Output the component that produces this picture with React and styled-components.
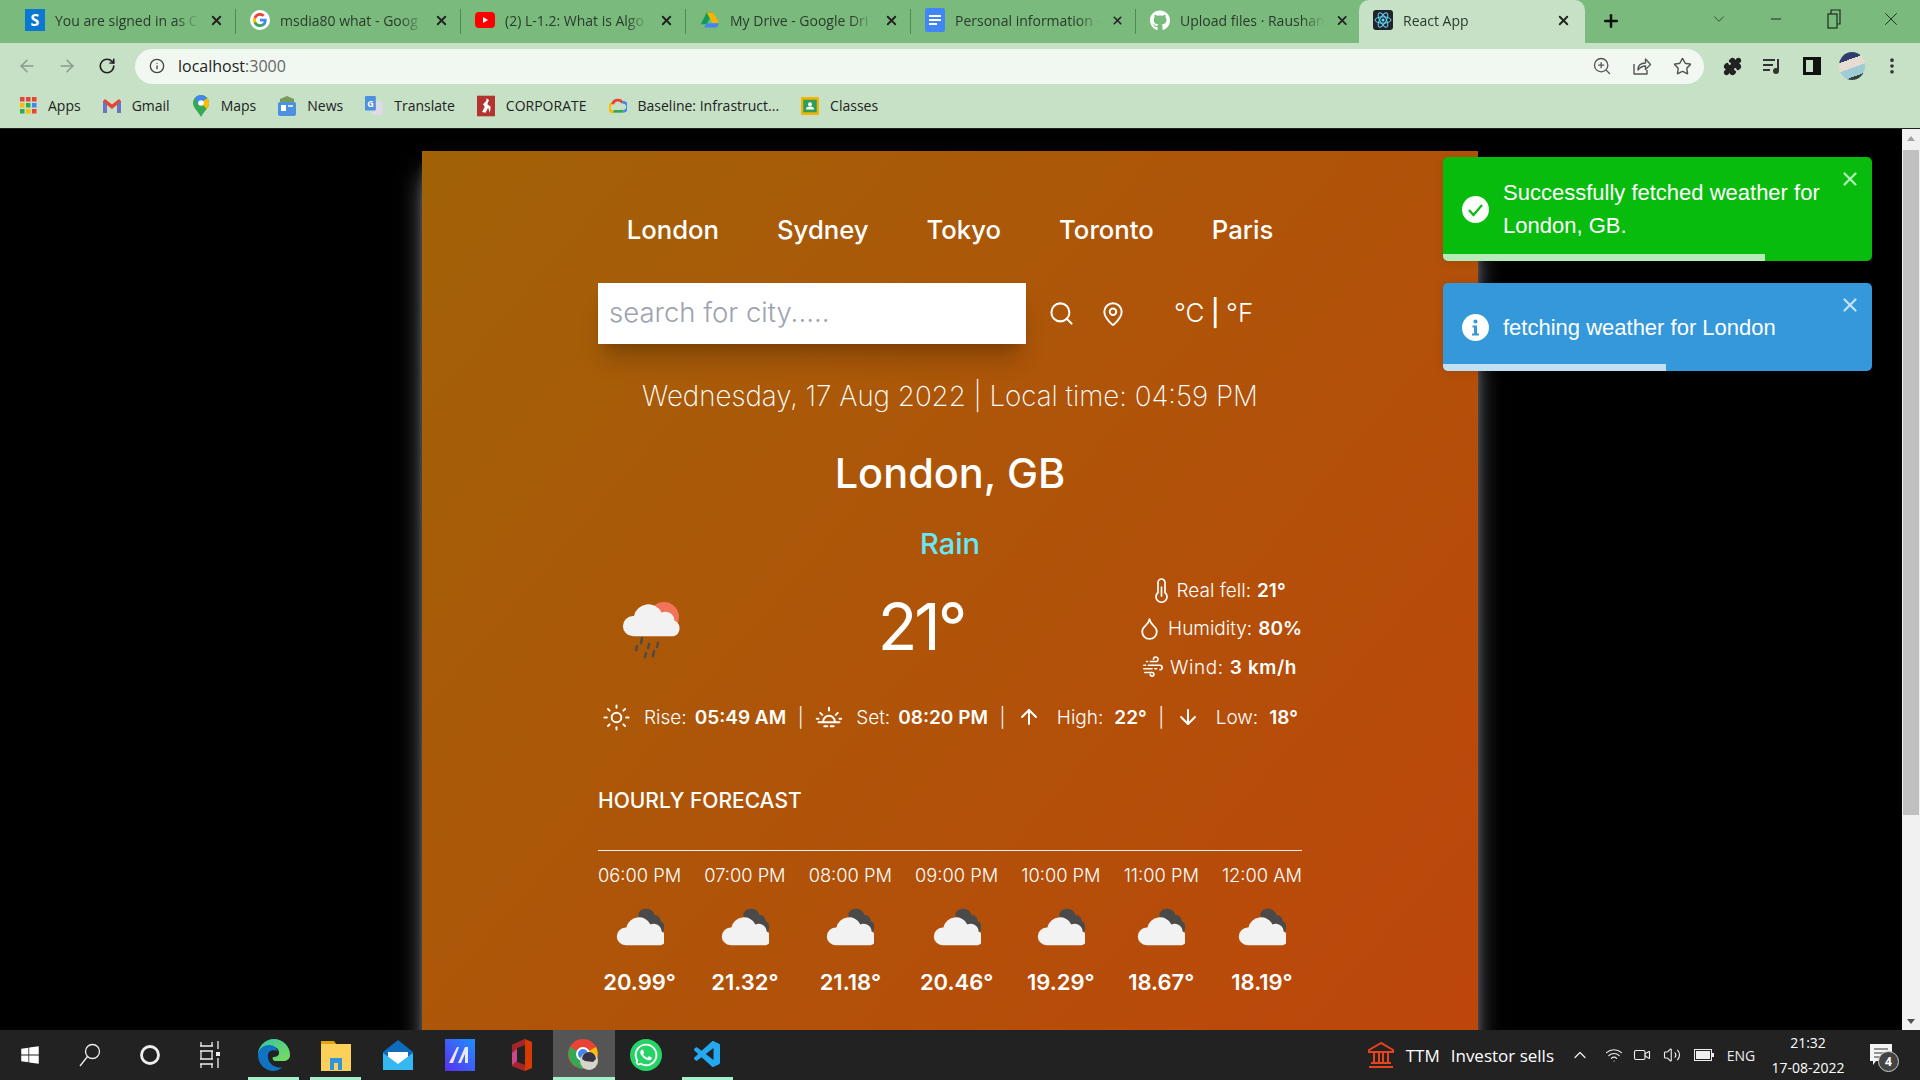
import React from "react";
import styled, { createGlobalStyle } from "styled-components";
import {
  Search, MapPin, Droplet, Sun, ArrowUp, ArrowDown, X, Plus, ArrowLeft, ArrowRight,
  RotateCw, Info, ZoomIn, Star, Puzzle, ChevronDown, Minus, EllipsisVertical, ChevronUp, Wifi, Video, Volume2,
} from "lucide-react";
import { FaGithub, FaWindows, FaWhatsapp } from "react-icons/fa";
import { VscVscode } from "react-icons/vsc";

const GlobalStyle = createGlobalStyle`
  html, body { margin: 0; padding: 0; background: #000; overflow: hidden; }
  * { box-sizing: border-box; }
`;

const Shell = styled.div`
  width: 1920px;
  height: 1080px;
  display: flex;
  flex-direction: column;
  overflow: hidden;
  font-family: "Open Sans", "Liberation Sans", sans-serif;
`;

/* ---- browser chrome ---- */
const TabStrip = styled.div`
  height: 43px;
  background: #7abb7d;
  display: flex;
  align-items: stretch;
  padding-left: 11px;
  flex-shrink: 0;
`;
const Tab = styled.div`
  width: ${(p) => (p.$active ? "226px" : "225px")};
  margin-left: ${(p) => (p.$active ? "-2px" : "0")};
  display: flex;
  align-items: center;
  padding: 0 ${(p) => (p.$active ? 14 : 12)}px 3px 14px;
  gap: 10px;
  position: relative;
  color: #2b3a2c;
  font-size: 14px;
  background: ${(p) => (p.$active ? "#c6e1c6" : "transparent")};
  border-radius: ${(p) => (p.$active ? "10px 10px 0 0" : "0")};
  ${(p) =>
    p.$sep &&
    `&::after { content: ""; position: absolute; right: 0; top: 9px; height: 25px; width: 1px; background: #4f8a53; }`}
`;
const TabTitle = styled.span`
  flex: 1;
  white-space: nowrap;
  -webkit-mask-image: linear-gradient(90deg, #000 ${(p) => (p.$active ? "100%" : "84%")}, transparent);
  mask-image: linear-gradient(90deg, #000 ${(p) => (p.$active ? "100%" : "84%")}, transparent);
`;
const Fav = styled.span`
  width: 20px;
  height: 20px;
  flex-shrink: 0;
  display: flex;
  align-items: center;
  justify-content: center;
`;
const NewTab = styled.div`
  width: 52px;
  padding-bottom: 2px;
  display: flex;
  align-items: center;
  justify-content: center;
  color: #111;
`;
const WindowControls = styled.div`
  margin-left: auto;
  display: flex;
`;
const WindowBtn = styled.div`
  width: 57.5px;
  display: flex;
  align-items: center;
  justify-content: center;
  padding-bottom: 6px;
  color: #1c2b1d;
`;
const Toolbar = styled.div`
  height: 43px;
  background: #c6e1c6;
  display: flex;
  align-items: center;
  padding: 3px 8px 0 7px;
  flex-shrink: 0;
`;
const ToolBtn = styled.div`
  width: ${(p) => p.$w || 40}px;
  height: 35px;
  display: flex;
  align-items: center;
  justify-content: center;
  flex-shrink: 0;
  color: ${(p) => p.$color || "#333"};
`;
const OmniBtn = styled(ToolBtn)`
  margin-left: ${(p) => (p.$first ? "0" : "-13px")};
`;
const Omnibox = styled.div`
  flex: 1;
  height: 35px;
  margin: 0 8px;
  background: #f1f8f1;
  border-radius: 18px;
  display: flex;
  align-items: center;
  padding: 0 2px 0 14px;
  gap: 13px;
  font-size: 16px;
  color: #222;
`;
const Url = styled.span`
  flex: 1;
  span { color: #666; }
`;
const Avatar = styled.div`
  width: 26px;
  height: 28px;
  border-radius: 50%;
  background: linear-gradient(160deg, #2f3d6b 0 30%, #e7dcd2 30% 55%, #9ecbd6 55% 80%, #33403c 80%);
`;
const BookmarksBar = styled.div`
  height: 43px;
  background: #c6e1c6;
  border-bottom: 1px solid #222;
  display: flex;
  align-items: center;
  padding: 0 0 3px 19px;
  gap: 22px;
  flex-shrink: 0;
  font-size: 14px;
  color: #222;
`;
const Bookmark = styled.div`
  display: flex;
  align-items: center;
  gap: 11px;
  white-space: nowrap;
`;
const BookmarkIcon = styled.span`
  width: 18px;
  height: 24px;
  display: flex;
  align-items: center;
  justify-content: center;
`;

/* ---- page ---- */
const Viewport = styled.div`
  flex: 1;
  min-height: 0;
  display: flex;
  position: relative;
  background: #000;
`;
const Page = styled.div`
  flex: 1;
  overflow: hidden;
  display: flex;
  justify-content: center;
  padding: 22px 2px 0 0;
`;
const Panel = styled.main`
  width: 1056px;
  height: 1240px;
  padding: 64px 176px 0;
  flex-shrink: 0;
  color: #fff;
  font-family: Inter, "Open Sans", sans-serif;
  background: linear-gradient(to bottom right, #a16207, #c2410c);
  box-shadow: 0 20px 25px -5px #9ca3af, 0 8px 10px -6px #9ca3af;
`;
const Nav = styled.nav`
  display: flex;
  justify-content: center;
  gap: 58px;
  font-size: 25.7px;
  line-height: 30px;
  font-weight: 500;
`;
const SearchRow = styled.div`
  margin-top: 38px;
  display: flex;
  align-items: center;
`;
const SearchInput = styled.input`
  width: 428px;
  height: 61px;
  border: 0;
  outline: 0;
  padding: 0 11px 4px;
  font: 300 27.5px Inter, sans-serif;
  background: #fff;
  box-shadow: 0 20px 25px -5px rgba(0, 0, 0, 0.2), 0 8px 10px -6px rgba(0, 0, 0, 0.15);
  &::placeholder { color: #9ca3af; opacity: 1; }
`;
const IconBtn = styled.span`
  display: flex;
  margin-left: ${(p) => p.$ml}px;
`;
const Units = styled.div`
  margin-left: 48px;
  padding-bottom: 2px;
  font-size: 26px;
  font-weight: 300;
  white-space: nowrap;
  word-spacing: -1px;
  b { font-weight: 500; }
`;
const DateLine = styled.p`
  margin: 32px 0 0;
  text-align: center;
  font-size: 27.7px;
  line-height: 40px;
  font-weight: 200;
`;
const City = styled.h1`
  margin: 32px 0 0;
  text-align: center;
  font-size: 41.5px;
  line-height: 50px;
  font-weight: 500;
`;
const Condition = styled.p`
  margin: 28px 0 0;
  text-align: center;
  font-size: 29px;
  line-height: 36px;
  font-weight: 500;
  color: #67e8f9;
`;
const NowRow = styled.div`
  margin-top: 9px;
  height: 115px;
  display: flex;
  align-items: center;
  justify-content: space-between;
`;
const IconWrap = styled.div`
  width: 110px;
  display: flex;
  justify-content: center;
`;
const BigTemp = styled.div`
  font-size: 65px;
  font-weight: 400;
  letter-spacing: -3px;
  padding: 0 3px 4px 0;
`;
const Details = styled.div`
  display: flex;
  flex-direction: column;
  align-items: center;
`;
const Detail = styled.div`
  display: flex;
  align-items: center;
  gap: 6px;
  height: 38.5px;
  font-size: 19px;
  font-weight: 300;
  white-space: nowrap;
  letter-spacing: ${(p) => p.$ls || 0}px;
  b { font-weight: 600; }
`;
const SunRow = styled.div`
  margin-top: 16px;
  height: 30px;
  display: flex;
  align-items: center;
  justify-content: center;
  font-size: 19px;
  font-weight: 300;
  white-space: nowrap;
`;
const Stat = styled.div`
  display: flex;
  align-items: center;
  gap: ${(p) => p.$gap}px;
  b { font-weight: 600; margin-left: -5px; }
`;
const Bar = styled.span`
  margin: 0 11.5px;
`;
const ForecastTitle = styled.h2`
  margin: 54px 0 0;
  font-size: 21px;
  line-height: 30px;
  font-weight: 500;
`;
const Rule = styled.hr`
  margin: 34px 0 0;
  border: 0;
  border-top: 1px solid #eee;
`;
const HourRow = styled.div`
  margin-top: 11px;
  display: flex;
  justify-content: space-between;
`;
const HourCol = styled.div`
  display: flex;
  flex-direction: column;
  align-items: center;
  font-size: 18.3px;
  font-weight: 300;
  line-height: 26px;
  white-space: nowrap;
`;
const HourIcon = styled.div`
  height: 50px;
  margin-top: 13px;
  display: flex;
  align-items: center;
`;
const HourTemp = styled.div`
  margin-top: 18px;
  font-size: 22px;
  font-weight: 600;
`;

/* ---- toasts ---- */
const Toasts = styled.div`
  position: absolute;
  left: 1443px;
  top: 28px;
  width: 429px;
  display: flex;
  flex-direction: column;
  gap: 22px;
  font-family: "Liberation Sans", Arial, sans-serif;
  color: #fff;
`;
const Toast = styled.div`
  position: relative;
  height: ${(p) => p.$h}px;
  background: ${(p) => p.$bg};
  border-radius: 5px;
  overflow: hidden;
  display: flex;
  align-items: center;
  padding: 0 40px 0 19px;
  gap: 14px;
  font-size: 22px;
  line-height: 33px;
  box-shadow: 0 1px 10px rgba(0, 0, 0, 0.1);
  svg { flex-shrink: 0; }
`;
const ToastClose = styled.span`
  position: absolute;
  top: 11px;
  right: 11px;
  display: flex;
  opacity: 0.7;
`;
const Progress = styled.div`
  position: absolute;
  left: 0;
  bottom: 0;
  height: 7px;
  background: rgba(255, 255, 255, 0.7);
`;

/* ---- scrollbar ---- */
const ScrollTrack = styled.div`
  width: 18px;
  flex-shrink: 0;
  background: #f1f1f1;
  display: flex;
  flex-direction: column;
  align-items: stretch;
`;
const ScrollArrow = styled.div`
  height: 18px;
  display: flex;
  align-items: center;
  justify-content: center;
  &::before {
    content: "";
    border-left: 4px solid transparent;
    border-right: 4px solid transparent;
    ${(p) => (p.$down ? "border-top: 5px solid #505050;" : "border-bottom: 5px solid #a3a3a3;")}
  }
`;
const ScrollThumb = styled.div`
  height: 665px;
  margin: 3px 1px 0 1px;
  background: #c0c0c0;
`;
const ScrollRest = styled.div`
  flex: 1;
`;

/* ---- taskbar ---- */
const Taskbar = styled.footer`
  height: 50px;
  flex-shrink: 0;
  background: #222;
  color: #fff;
  display: flex;
  align-items: center;
  font-family: "Open Sans", sans-serif;
`;
const SysBtn = styled.div`
  width: 60px;
  height: 50px;
  display: flex;
  align-items: center;
  justify-content: center;
`;
const PinnedRow = styled.div`
  margin-left: 3px;
  display: flex;
`;
const Pinned = styled.div`
  width: 62px;
  height: 50px;
  position: relative;
  display: flex;
  align-items: center;
  justify-content: center;
  background: ${(p) => (p.$current ? "#555" : "transparent")};
  ${(p) =>
    p.$open &&
    `&::after { content: ""; position: absolute; bottom: 0; left: ${p.$current ? 0 : 5}px; right: ${p.$current ? 0 : 6}px; height: 3px; background: #a4efcc; }`}
`;
const Tray = styled.div`
  margin-left: auto;
  height: 50px;
  padding-right: 14px;
  display: flex;
  align-items: center;
`;
const Ticker = styled.div`
  display: flex;
  align-items: center;
  gap: 11px;
  font-size: 17px;
  margin-right: 7px;
  white-space: nowrap;
`;
const TrayIcon = styled.div`
  width: ${(p) => p.$w || 30}px;
  margin-right: 2px;
  display: flex;
  justify-content: center;
  font-size: 14px;
  color: #eee;
`;
const Clock = styled.div`
  width: 90px;
  text-align: center;
  font-size: 14px;
  line-height: 25px;
`;
const Notify = styled.div`
  width: 50px;
  margin-left: 3px;
  display: flex;
  justify-content: center;
  position: relative;
`;
const Badge = styled.span`
  position: absolute;
  right: 7px;
  top: 7px;
  width: 21px;
  height: 21px;
  border-radius: 50%;
  border: 1px solid #ccc;
  background: #444;
  font-size: 12px;
  font-weight: 700;
  display: flex;
  align-items: center;
  justify-content: center;
`;

/* ---- drawings ---- */
const CloudPath = "M12 46a11 11 0 0 1 0-22h1a16 16 0 0 1 30-4 10 10 0 0 1 14 9 9 9 0 0 1-1 17z";

const RainIcon = () => (
  <svg width="62" height="60" viewBox="0 0 62 60">
    <circle cx="42" cy="18" r="15" fill="#f0735a" />
    <g transform="translate(0 -5) scale(.92)">
      <path d={CloudPath} fill="#f2f2f2" />
    </g>
    <g stroke="#4a4a4a" strokeWidth="2.4" strokeLinecap="round">
      <path d="M20 39l-1 5M15 47l-1 4M27 45l-1 4M36 44l-1 4M24 54l-1 4M32 52l-1 5" />
    </g>
  </svg>
);

const CloudIcon = () => (
  <svg width="48" height="42" viewBox="0 0 60 52">
    <path d="M28 10a11 11 0 0 1 20 2 9 9 0 0 1 8 8 8 8 0 0 1 1 14 8 8 0 0 1-8 6H30z" fill="#4a4a4a" />
    <path d={CloudPath} fill="#f2f2f2" transform="translate(0 4)" />
  </svg>
);

const GoogleG = ({ size = 20 }) => (
  <svg width={size} height={size} viewBox="0 0 24 24">
    <circle cx="12" cy="12" r="12" fill="#fff" />
    <path d="M20 12.2c0-.6 0-1.100-.1-1.700H12v3.300h4.500a3.900 3.900 0 0 1-1.700 2.500v2.100h2.700c1.600-1.500 2.500-3.600 2.500-6.200z" fill="#4285f4" />
    <path d="M12 20.400c2.300 0 4.200-.8 5.500-2l-2.700-2.100c-.7.500-1.700.8-2.800.8-2.200 0-4-1.500-4.700-3.400H4.500v2.100a8.300 8.300 0 0 0 7.500 4.600z" fill="#34a853" />
    <path d="M7.300 13.700a5 5 0 0 1 0-3.300V8.300H4.500a8.300 8.300 0 0 0 0 7.500z" fill="#fbbc05" />
    <path d="M12 6.900c1.200 0 2.300.4 3.200 1.200l2.400-2.400A8.300 8.300 0 0 0 4.500 8.300l2.800 2.100C8 8.500 9.800 6.900 12 6.900z" fill="#ea4335" />
  </svg>
);
const SharePoint = () => (
  <svg width="20" height="22" viewBox="0 0 20 22">
    <rect width="20" height="22" fill="#0a78d1" />
    <text x="10" y="17" textAnchor="middle" fontSize="16" fontWeight="700" fontFamily="Open Sans" fill="#fff">S</text>
  </svg>
);
const YouTube = () => (
  <svg width="20" height="16" viewBox="0 0 20 16">
    <rect width="20" height="16" rx="4" fill="#f00" />
    <path d="M8 5l5 3-5 3z" fill="#fff" />
  </svg>
);
const Drive = ({ size = 20 }) => (
  <svg width={size} height={size} viewBox="0 0 24 24">
    <path d="M8 3h8l-8 14H1z" fill="#0f9d58" />
    <path d="M8 3h8l7 13h-8z" fill="#f4b400" />
    <path d="M5 21l3-5h15l-3 5z" fill="#4285f4" />
  </svg>
);
const Docs = () => (
  <svg width="20" height="24" viewBox="0 0 20 24">
    <rect width="20" height="24" rx="2" fill="#4285f4" />
    <path d="M4 8h12M4 12h12M4 16h8" stroke="#fff" strokeWidth="2" />
  </svg>
);
const ReactFav = () => (
  <svg width="20" height="20" viewBox="0 0 20 20">
    <rect width="20" height="20" rx="3" fill="#20232a" />
    <g fill="none" stroke="#61dafb" strokeWidth="1">
      <ellipse cx="10" cy="10" rx="8" ry="3.200" />
      <ellipse cx="10" cy="10" rx="8" ry="3.200" transform="rotate(60 10 10)" />
      <ellipse cx="10" cy="10" rx="8" ry="3.200" transform="rotate(120 10 10)" />
    </g>
    <circle cx="10" cy="10" r="1.500" fill="#61dafb" />
  </svg>
);
const Apps = () => (
  <svg width="17" height="17" viewBox="0 0 17 17">
    {[0, 1, 2].map((r) =>
      [0, 1, 2].map((c) => (
        <rect key={`${r}${c}`} x={c * 6} y={r * 6} width="4.500" height="4.500"
          fill={[["#ea4335", "#ea4335", "#ea4335"], ["#fbbc05", "#34a853", "#4285f4"], ["#34a853", "#fbbc05", "#ea4335"]][r][c]} />
      ))
    )}
  </svg>
);
const Gmail = () => (
  <svg width="18" height="14" viewBox="0 0 18 14">
    <path d="M0 2v12h4V6l5 4 5-4v8h4V2l-2-2-7 5.500L2 0z" fill="#ea4335" />
    <path d="M0 2v12h4V5zM18 2v12h-4V5z" fill="#4285f4" opacity=".75" />
  </svg>
);
const MapsPin = () => (
  <svg width="16" height="22" viewBox="0 0 16 22">
    <path d="M8 0a8 8 0 0 0-8 8c0 5 5 8 8 14 3-6 8-9 8-14a8 8 0 0 0-8-8z" fill="#34a853" />
    <path d="M2 2.500L14 14c1-2 2-3.800 2-6a8 8 0 0 0-1.500-4.600z" fill="#fbbc05" />
    <path d="M2.300 2.400A8 8 0 0 1 14 3L5 10z" fill="#4285f4" />
    <circle cx="8" cy="8" r="2.800" fill="#fff" />
  </svg>
);
const NewsIcon = () => (
  <svg width="18" height="20" viewBox="0 0 18 20">
    <path d="M2 3l7-3 7 3v4H2z" fill="#7a9a5c" />
    <rect y="6" width="18" height="14" rx="2" fill="#4d8fe0" />
    <rect x="3" y="9" width="5" height="6" fill="#fff" />
    <rect x="10" y="9" width="5" height="2" fill="#cfe0f7" />
  </svg>
);
const TranslateIcon = () => (
  <svg width="20" height="22" viewBox="0 0 20 22">
    <rect x="7" y="6" width="13" height="15" rx="1" fill="#dcdce6" />
    <rect width="12" height="16" rx="1" fill="#4d8fe0" />
    <text x="6" y="12" textAnchor="middle" fontSize="10" fontWeight="700" fontFamily="Open Sans" fill="#fff">G</text>
  </svg>
);
const Corporate = () => (
  <svg width="21" height="24" viewBox="0 0 21 24">
    <rect width="21" height="24" fill="#b2332f" />
    <path d="M11 3l3 2-2 5 4 3-1 7-2-6-3 6-4-1 3-6-2-3 4-4z" fill="#fff" />
  </svg>
);
const CloudColor = () => (
  <svg width="20" height="17" viewBox="0 0 20 17">
    <path d="M5 16a5 5 0 0 1-1-9.800" fill="none" stroke="#fbbc05" strokeWidth="3" />
    <path d="M4 7a6 6 0 0 1 11-1.500" fill="none" stroke="#ea4335" strokeWidth="3" />
    <path d="M15 5a5 5 0 0 1 1 10" fill="none" stroke="#4285f4" strokeWidth="3" />
    <path d="M5 15h11" stroke="#34a853" strokeWidth="3" />
  </svg>
);
const Classroom = () => (
  <svg width="20" height="20" viewBox="0 0 20 20">
    <rect width="20" height="20" rx="1.500" fill="#f4b400" />
    <rect x="2.500" y="3" width="15" height="14" fill="#2f9e5b" />
    <circle cx="10" cy="8" r="2.200" fill="#fff" />
    <path d="M5.500 14a4.500 3.500 0 0 1 9 0z" fill="#fff" />
  </svg>
);
const ThermoIcon = () => (
  <svg width="17" height="25" viewBox="0 0 17 25" fill="none" stroke="#fff" strokeWidth="1.700" strokeLinecap="round">
    <path d="M5 14.500V4.500a3.500 3.500 0 0 1 7 0v10a5.500 5.500 0 1 1-7 0z" />
    <path d="M8.500 9v9" />
  </svg>
);
const WindIcon = () => (
  <svg width="22" height="22" viewBox="0 0 24 24" fill="none" stroke="#fff" strokeWidth="1.700" strokeLinecap="round">
    <path d="M9 6h6a2.500 2.500 0 1 0-2.500-2.500M2 10h2M7 10h12.500a2.500 2.500 0 1 1 0 5M2 14h9M14 14h2M3 18h8a2 2 0 1 1-2 2M5 6h1" />
  </svg>
);
const SunsetIcon = () => (
  <svg width="28" height="28" viewBox="0 0 24 24" fill="none" stroke="#fff" strokeWidth="1.700" strokeLinecap="round">
    <path d="M7 16a5 5 0 0 1 10 0M3 16.500h18M12 4v2.500M4.500 8.500l1.700 1.700M19.500 8.500l-1.700 1.700M1.500 13.500h1.500M21 13.500h1.500M8 20h2.500M13.500 20H16" />
  </svg>
);
const RestoreIcon = () => (
  <svg width="14" height="20" viewBox="0 0 14 20" fill="none" stroke="#1c2b1d" strokeWidth="1.200">
    <rect x="1" y="5" width="9" height="14" />
    <path d="M4 5V1h9v14h-3" />
  </svg>
);
const ShareIcon = () => (
  <svg width="20" height="20" viewBox="0 0 20 20" fill="none" stroke="#555" strokeWidth="1.400" strokeLinejoin="round">
    <path d="M2 8v10h13v-4" />
    <path d="M6 14c0-5 3-7 7.500-7V3l5 5.500-5 5v-3.500c-3.500 0-5.500 1.500-7.500 4z" />
  </svg>
);
const MediaIcon = () => (
  <svg width="20" height="20" viewBox="0 0 20 20" fill="none" stroke="#333" strokeWidth="2">
    <path d="M1 4h12M1 9h10M1 14h7M16 3v11" />
    <circle cx="14" cy="15" r="2" fill="#333" />
  </svg>
);
const SidePanel = () => (
  <svg width="18" height="18" viewBox="0 0 18 18">
    <rect x="1.500" y="1.500" width="15" height="15" fill="none" stroke="#111" strokeWidth="3" />
    <rect x="10" y="2" width="6" height="14" fill="#111" />
  </svg>
);
const Magnifier = () => (
  <svg width="22" height="24" viewBox="0 0 22 24" fill="none" stroke="#eee" strokeWidth="1.300">
    <circle cx="13.500" cy="8.500" r="7" />
    <path d="M8.500 13.500L1 23" />
  </svg>
);
const Cortana = () => (
  <svg width="22" height="22" viewBox="0 0 22 22">
    <circle cx="11" cy="11" r="8.500" fill="none" stroke="#eee" strokeWidth="2.800" />
  </svg>
);
const TaskView = () => (
  <svg width="20" height="30" viewBox="0 0 20 30" fill="none" stroke="#eee" strokeWidth="1.300">
    <path d="M0 6h13M0 11h13M0 19h13M0 24h13M1 11v8M12 11v8M1 2v4M12 2v4M1 24v4M12 24v4" />
    <path d="M18 1v8M18 18v10" />
    <rect x="16" y="12" width="4" height="4" fill="#eee" stroke="none" />
  </svg>
);
const Edge = () => (
  <svg width="32" height="32" viewBox="0 0 32 32">
    <defs>
      <linearGradient id="edgeA" x1="0" y1="0" x2="1" y2="1">
        <stop offset="0" stopColor="#36c5a5" />
        <stop offset="1" stopColor="#7ade5a" />
      </linearGradient>
    </defs>
    <path d="M16 0a16 16 0 0 1 16 16c0 4-3 6-7 6h-7c-3 0-4-2-3-4 3 0 6-1 6-4C21 8 14 6 8 9 3 11 0 15 0 16 0 7 7 0 16 0z" fill="url(#edgeA)" />
    <path d="M0 16c0-6 6-10 11-10 5 0 8 3 8 6-5-2-10 0-9 7 1 7 9 11 15 9a16 16 0 0 1-9 4C7 32 0 25 0 16z" fill="#0f74c4" />
  </svg>
);
const Explorer = () => (
  <svg width="30" height="32" viewBox="0 0 30 32">
    <path d="M0 2h13l3 4H0z" fill="#e5a50a" />
    <rect y="5" width="30" height="27" fill="#fbd15b" />
    <path d="M9 31V19h12v12h-4v-7h-4v7z" fill="#2f95dc" />
  </svg>
);
const Mail = () => (
  <svg width="30" height="30" viewBox="0 0 30 30">
    <path d="M15 0l15 12v18H0V12z" fill="#0f6cbd" />
    <path d="M5 12h20v5l-10 8-10-8z" fill="#fff" />
    <path d="M0 30V13l15 11 15-11v17z" fill="#35b8f1" />
  </svg>
);
const MaxApp = () => (
  <svg width="30" height="32" viewBox="0 0 30 32">
    <defs>
      <linearGradient id="maxA" x1="0" y1="1" x2="1" y2="0">
        <stop offset="0" stopColor="#5b2ff0" />
        <stop offset="1" stopColor="#1e90ff" />
      </linearGradient>
    </defs>
    <rect width="30" height="32" fill="url(#maxA)" />
    <path d="M4 24L12 8h2L8 24zM13 24L20 8h3v16h-3v-9l-4 9z" fill="#e8e8ff" />
  </svg>
);
const Office = () => (
  <svg width="24" height="32" viewBox="0 0 24 32">
    <path d="M2 6l13-6 7 3v26l-7 3-13-5z" fill="#d83b01" />
    <path d="M2 6l13-6v6L7 9v14l8 3v6L2 27z" fill="#a4262c" />
    <path d="M7 9l8-3v20l-8-3z" fill="#222" />
    <path d="M2 14l5-4v12l-5 4z" fill="#c84a8a" />
  </svg>
);
const ChromeAvatar = () => (
  <svg width="32" height="32" viewBox="0 0 32 32">
    <circle cx="15" cy="15" r="15" fill="#ea4335" />
    <path d="M15 15L28 8a15 15 0 0 1-8 21z" fill="#fbbc05" />
    <path d="M15 15l5 14A15 15 0 0 1 2 8z" fill="#34a853" />
    <circle cx="15" cy="15" r="6" fill="#4285f4" stroke="#fff" strokeWidth="2" />
    <circle cx="21" cy="22" r="9" fill="#d8d4cc" />
    <path d="M14 20a7 7 0 0 1 14 0l-3 3-8-1z" fill="#334" />
  </svg>
);
const Bank = () => (
  <svg width="28" height="28" viewBox="0 0 28 28" fill="none" stroke="#e8431c" strokeWidth="2">
    <path d="M14 2L2 9v2h24V9zM2 26h24M4 22h20M7 11v11M12 11v11M16 11v11M21 11v11" />
  </svg>
);
const Battery = () => (
  <svg width="20" height="12" viewBox="0 0 20 12">
    <rect x=".500" y=".500" width="17" height="11" fill="none" stroke="#eee" />
    <rect x="2" y="2" width="14" height="8" fill="#eee" />
    <rect x="18" y="4" width="2" height="4" fill="#eee" />
  </svg>
);
const ChatIcon = () => (
  <svg width="22" height="22" viewBox="0 0 22 22">
    <path d="M0 0h22v17H6l-3 4v-4H0z" fill="#f4f4f4" />
    <path d="M4 5h14M4 9h14M4 13h9" stroke="#333" strokeWidth="1.200" />
  </svg>
);
const ToastCheck = () => (
  <svg width="27" height="27" viewBox="0 0 27 27">
    <circle cx="13.500" cy="13.500" r="13.500" fill="#fff" />
    <path d="M7 14l4.500 5L20 9" fill="none" stroke="#07bc0c" strokeWidth="2.200" />
  </svg>
);
const ToastInfo = () => (
  <svg width="27" height="27" viewBox="0 0 27 27">
    <circle cx="13.500" cy="13.500" r="13.500" fill="#fff" />
    <circle cx="13.500" cy="7.500" r="2" fill="#3498db" />
    <path d="M10.500 11.500h4.500v8h2v2h-7v-2h2v-6h-1.500z" fill="#3498db" />
  </svg>
);
const WhatsApp = styled(FaWhatsapp)`
  background: #25d366;
  border-radius: 50%;
  padding: 3px;
`;

/* ---- data ---- */
const tabs = [
  { title: "You are signed in as C", icon: <SharePoint /> },
  { title: "msdia80 what - Goog", icon: <GoogleG /> },
  { title: "(2) L-1.2: What is Algo", icon: <YouTube /> },
  { title: "My Drive - Google Dri", icon: <Drive /> },
  { title: "Personal information -", icon: <Docs /> },
  { title: "Upload files · Raushan", icon: <FaGithub size={21} color="#fff" /> },
];
const bookmarks = [
  { label: "Apps", icon: <Apps /> },
  { label: "Gmail", icon: <Gmail /> },
  { label: "Maps", icon: <MapsPin /> },
  { label: "News", icon: <NewsIcon /> },
  { label: "Translate", icon: <TranslateIcon /> },
  { label: "CORPORATE", icon: <Corporate /> },
  { label: "Baseline: Infrastruct...", icon: <CloudColor /> },
  { label: "Classes", icon: <Classroom /> },
];
const cities = ["London", "Sydney", "Tokyo", "Toronto", "Paris"];
const hours = [
  ["06:00 PM", "20.99°"],
  ["07:00 PM", "21.32°"],
  ["08:00 PM", "21.18°"],
  ["09:00 PM", "20.46°"],
  ["10:00 PM", "19.29°"],
  ["11:00 PM", "18.67°"],
  ["12:00 AM", "18.19°"],
];
const pinned = [
  { icon: <Edge />, open: true },
  { icon: <Explorer />, open: true },
  { icon: <Mail /> },
  { icon: <MaxApp /> },
  { icon: <Office /> },
  { icon: <ChromeAvatar />, open: true, current: true },
  { icon: <WhatsApp size={32} color="#fff" /> },
  { icon: <VscVscode size={32} color="#23a9f2" />, open: true },
];

export default function App() {
  return (
    <Shell>
      <GlobalStyle />
      <TabStrip>
        {tabs.map((t, i) => (
          <Tab key={t.title} $sep={i < 5}>
            <Fav>{t.icon}</Fav>
            <TabTitle>{t.title}</TabTitle>
            <X size={15} strokeWidth={3} color="#222" />
          </Tab>
        ))}
        <Tab $active>
          <Fav><ReactFav /></Fav>
          <TabTitle $active>React App</TabTitle>
          <X size={15} strokeWidth={3} color="#222" />
        </Tab>
        <NewTab><Plus size={20} strokeWidth={3} /></NewTab>
        <WindowControls>
          <WindowBtn><ChevronDown size={18} strokeWidth={1} /></WindowBtn>
          <WindowBtn><Minus size={16} strokeWidth={1.5} /></WindowBtn>
          <WindowBtn><RestoreIcon /></WindowBtn>
          <WindowBtn><X size={22} strokeWidth={1} /></WindowBtn>
        </WindowControls>
      </TabStrip>
      <Toolbar>
        <ToolBtn $color="#8a9a8a"><ArrowLeft size={20} strokeWidth={1.8} /></ToolBtn>
        <ToolBtn $color="#8a9a8a"><ArrowRight size={20} strokeWidth={1.8} /></ToolBtn>
        <ToolBtn $color="#222"><RotateCw size={18} strokeWidth={2.2} /></ToolBtn>
        <Omnibox>
          <Info size={16} color="#444" />
          <Url>localhost<span>:3000</span></Url>
          <OmniBtn $first $color="#555"><ZoomIn size={20} strokeWidth={1.6} /></OmniBtn>
          <OmniBtn><ShareIcon /></OmniBtn>
          <OmniBtn $color="#555"><Star size={19} strokeWidth={1.8} /></OmniBtn>
        </Omnibox>
        <ToolBtn><Puzzle size={19} fill="#222" color="#222" /></ToolBtn>
        <ToolBtn><MediaIcon /></ToolBtn>
        <ToolBtn><SidePanel /></ToolBtn>
        <ToolBtn><Avatar /></ToolBtn>
        <ToolBtn><EllipsisVertical size={20} strokeWidth={2.4} /></ToolBtn>
      </Toolbar>
      <BookmarksBar>
        {bookmarks.map((b) => (
          <Bookmark key={b.label}><BookmarkIcon>{b.icon}</BookmarkIcon>{b.label}</Bookmark>
        ))}
      </BookmarksBar>

      <Viewport>
        <Page>
          <Panel>
            <Nav>
              {cities.map((c) => <span key={c}>{c}</span>)}
            </Nav>
            <SearchRow>
              <SearchInput placeholder="search for city....." />
              <IconBtn $ml={22}><Search size={27} strokeWidth={1.8} /></IconBtn>
              <IconBtn $ml={25}><MapPin size={26} strokeWidth={1.8} /></IconBtn>
              <Units>°C <b>|</b> °F</Units>
            </SearchRow>
            <DateLine>Wednesday, 17 Aug 2022 | Local time: 04:59 PM</DateLine>
            <City>London, GB</City>
            <Condition>Rain</Condition>
            <NowRow>
              <IconWrap><RainIcon /></IconWrap>
              <BigTemp>21°</BigTemp>
              <Details>
                <Detail><ThermoIcon />Real fell: <b>21°</b></Detail>
                <Detail><Droplet size={25} strokeWidth={1.7} />Humidity: <b>80%</b></Detail>
                <Detail $ls={0.6}><WindIcon />Wind: <b>3 km/h</b></Detail>
              </Details>
            </NowRow>
            <SunRow>
              <Stat $gap={13}><Sun size={29} strokeWidth={1.6} /><span>Rise:</span><b>05:49 AM</b></Stat>
              <Bar>|</Bar>
              <Stat $gap={13}><SunsetIcon /><span>Set:</span><b>08:20 PM</b></Stat>
              <Bar>|</Bar>
              <Stat $gap={16}><ArrowUp size={24} strokeWidth={2} /><span>High:</span><b>22°</b></Stat>
              <Bar>|</Bar>
              <Stat $gap={16}><ArrowDown size={24} strokeWidth={2} /><span>Low:</span><b>18°</b></Stat>
            </SunRow>
            <ForecastTitle>HOURLY FORECAST</ForecastTitle>
            <Rule />
            <HourRow>
              {hours.map(([h, t]) => (
                <HourCol key={h}>
                  <span>{h}</span>
                  <HourIcon><CloudIcon /></HourIcon>
                  <HourTemp>{t}</HourTemp>
                </HourCol>
              ))}
            </HourRow>
          </Panel>
        </Page>
        <ScrollTrack>
          <ScrollArrow />
          <ScrollThumb />
          <ScrollRest />
          <ScrollArrow $down />
        </ScrollTrack>
        <Toasts>
          <Toast $h={104} $bg="#07bc0c">
            <ToastCheck />
            <span>Successfully fetched weather for London, GB.</span>
            <ToastClose><X size={22} strokeWidth={2.5} /></ToastClose>
            <Progress style={{ width: 322 }} />
          </Toast>
          <Toast $h={88} $bg="#3498db">
            <ToastInfo />
            <span>fetching weather for London</span>
            <ToastClose><X size={22} strokeWidth={2.5} /></ToastClose>
            <Progress style={{ width: 223 }} />
          </Toast>
        </Toasts>
      </Viewport>

      <Taskbar>
        <SysBtn><FaWindows size={20} /></SysBtn>
        <SysBtn><Magnifier /></SysBtn>
        <SysBtn><Cortana /></SysBtn>
        <SysBtn><TaskView /></SysBtn>
        <PinnedRow>
          {pinned.map((p, i) => (
            <Pinned key={i} $open={p.open} $current={p.current}>{p.icon}</Pinned>
          ))}
        </PinnedRow>
        <Tray>
          <Ticker><Bank /><span>TTM</span><span>Investor sells</span></Ticker>
          <TrayIcon $w={38}><ChevronUp size={20} strokeWidth={1.5} /></TrayIcon>
          <TrayIcon $w={26}><Wifi size={18} strokeWidth={1.5} /></TrayIcon>
          <TrayIcon $w={26}><Video size={18} strokeWidth={1.5} /></TrayIcon>
          <TrayIcon><Volume2 size={18} strokeWidth={1.5} /></TrayIcon>
          <TrayIcon><Battery /></TrayIcon>
          <TrayIcon $w={40}>ENG</TrayIcon>
          <Clock>21:32<br />17-08-2022</Clock>
          <Notify><ChatIcon /><Badge>4</Badge></Notify>
        </Tray>
      </Taskbar>
    </Shell>
  );
}
